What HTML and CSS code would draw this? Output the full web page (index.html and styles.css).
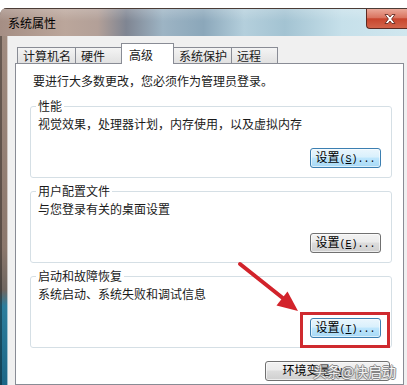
FILE: index.html
```html
<!DOCTYPE html>
<html lang="zh-CN">
<head>
  <meta charset="UTF-8">
  <meta name="viewport" content="width=device-width, initial-scale=1.0">
  <title>系统属性</title>
  <link rel="stylesheet" href="styles.css">
</head>
<body>
  <div class="window">
    <div class="titlebar">
      <span class="title">系统属性</span>
      <button class="close-btn" title="关闭">
        <svg width="12" height="10" viewBox="0 0 12 10">
          <path d="M1 0.5 L4 0.5 L6 3 L8 0.5 L11 0.5 L7.6 5 L11 9.5 L8 9.5 L6 7 L4 9.5 L1 9.5 L4.4 5 Z" fill="#fff" stroke="#5a1f17" stroke-width="0.8"/>
        </svg>
      </button>
    </div>

    <div class="dialog">
      <ul class="tabs">
        <li class="tab">计算机名</li>
        <li class="tab">硬件</li>
        <li class="tab active">高级</li>
        <li class="tab">系统保护</li>
        <li class="tab">远程</li>
      </ul>

      <div class="tab-page">
        <p class="intro">要进行大多数更改，您必须作为管理员登录。</p>

        <fieldset class="group">
          <legend>性能</legend>
          <p>视觉效果，处理器计划，内存使用，以及虚拟内存</p>
          <div class="actions">
            <button class="button hot">设置<span class="key">(<u>S</u>)...</span></button>
          </div>
        </fieldset>

        <fieldset class="group">
          <legend>用户配置文件</legend>
          <p>与您登录有关的桌面设置</p>
          <div class="actions">
            <button class="button">设置<span class="key">(<u>E</u>)...</span></button>
          </div>
        </fieldset>

        <fieldset class="group">
          <legend>启动和故障恢复</legend>
          <p>系统启动、系统失败和调试信息</p>
          <div class="actions">
            <span class="marked">
              <button class="button hot">设置<span class="key">(<u>T</u>)...</span></button>
              <span class="highlight"></span>
            </span>
          </div>
        </fieldset>

        <div class="actions env">
          <button class="button wide">环境变量<span class="key">(<u>N</u>)...</span></button>
          <span class="watermark">头条@快启动</span>
        </div>
      </div>
    </div>

    <!-- annotation arrow pointing at the startup settings button -->
    <svg class="arrow" width="80" height="70" viewBox="0 0 80 70">
      <line x1="10" y1="9" x2="54" y2="44" stroke="#d2232b" stroke-width="4" stroke-linecap="round"/>
      <polygon points="68,56 46.5,50.5 57.5,36.5" fill="#d2232b"/>
    </svg>
  </div>
</body>
</html>
```

FILE: styles.css
```css
* {
  box-sizing: border-box;
}
body {
  margin: 0;
  width: 407px;
  height: 385px;
  overflow: hidden;
  background: #fff;
  font-family: "Noto Sans CJK SC", "Microsoft YaHei", sans-serif;
  font-size: 12px;
  line-height: 16px;
  color: #1a1a1a;
}
.window {
  position: relative;
  margin-top: 8px;
  height: 377px;
  display: flex;
  flex-direction: column;
  border-top-left-radius: 7px;
  overflow: hidden;
  background: linear-gradient(to bottom, #a38e82 0, #8b776c 240px, #6f6660 282px, #2c7e9d 298px, #1c6686 100%);
  box-shadow: inset 2px 0 0 rgba(0, 0, 0, 0.35);
}
.titlebar {
  height: 28px;
  display: flex;
  align-items: center;
  justify-content: space-between;
  padding-left: 8px;
  border-top: 1px solid #4b3c36;
  background:
    linear-gradient(to bottom, rgba(255, 255, 255, 0.2), rgba(255, 255, 255, 0) 45%),
    linear-gradient(to right, #a58e84 0%, #bba69b 16%, #b3a098 24%, #7f8592 31%, #9db4c4 40%, #8ba7ba 50%, #b4cfdc 60%, #a3c3d2 70%, #c6e0ea 84%, #d0e7ef 100%);
}
.title {
  color: #000;
}
.close-btn {
  align-self: flex-start;
  width: 41px;
  height: 20px;
  padding: 0 0 0 17px;
  display: flex;
  align-items: center;
  border: 1px solid #5c2a22;
  border-top: 0;
  border-right: 0;
  border-radius: 0 0 0 4px;
  background: linear-gradient(#eaa898 0%, #da7561 45%, #c8452d 52%, #d2644a 100%);
}
.dialog {
  flex: 1;
  margin-left: 8px;
  padding: 7px 3px 0 7px;
  background: #f0f0f0;
  display: flex;
  flex-direction: column;
  box-shadow: -1px 0 0 rgba(255, 255, 255, 0.55);
}
.tabs {
  list-style: none;
  margin: 0 0 -1px;
  padding: 0 0 0 2px;
  height: 21px;
  display: flex;
  align-items: flex-end;
  position: relative;
  z-index: 1;
}
.tab {
  height: 16px;
  min-width: 47px;
  margin: 0 -1px 1px 0;
  padding: 0 4px 0 5px;
  border: 1px solid #898c95;
  border-bottom: 0;
  background: linear-gradient(#f4f4f4, #e1e1e1);
  white-space: nowrap;
}
.tab.active {
  height: 21px;
  min-width: 53px;
  margin-bottom: 0;
  padding: 3px 4px 0 7px;
  background: #fff;
  position: relative;
}
.tab-page {
  flex: 1;
  background: #fff;
  border: 1px solid #898c95;
  padding: 9px 11px 0 14px;
}
.intro {
  margin: 0 0 9px 3px;
}
.group {
  margin: 0 0 5px;
  padding: 2px 10px 9px 7px;
  min-width: 0;
  border: 1px solid #d5dfe5;
  border-radius: 3px;
}
.group legend {
  margin-left: -2px;
  padding: 0 2px;
}
.group p {
  margin: 0;
}
.actions {
  display: flex;
  justify-content: flex-end;
  margin-top: 16px;
}
.button {
  width: 71px;
  height: 20px;
  padding: 0;
  border: 1px solid #707070;
  border-radius: 3px;
  background: linear-gradient(#f2f2f2 0%, #ebebeb 45%, #dddddd 50%, #cfcfcf 100%);
  box-shadow: inset 0 0 0 1px rgba(255, 255, 255, 0.6);
  font-family: inherit;
  font-size: 12px;
  line-height: 16px;
  color: #000;
}
.button.hot {
  border-color: #3c7fb1;
  background: linear-gradient(#eaf6fd 0%, #d9f0fc 45%, #bee6fd 50%, #a7d9f5 100%);
}
.button.wide {
  width: 125px;
  padding-right: 6px;
}
.key {
  font-family: "Liberation Mono", monospace;
  font-size: 10px;
}
.marked {
  position: relative;
  display: flex;
}
.highlight {
  position: absolute;
  inset: -6px -9px -10px -10px;
  border: 3px solid #cf2a2f;
}
.env {
  position: relative;
  margin-top: 13px;
  padding-right: 2px;
}
.watermark {
  position: absolute;
  right: -4px;
  top: 0;
  font-size: 14px;
  line-height: 20px;
  color: #f6f6f6;
  text-shadow: 1px 0 0 #777, -1px 0 0 #777, 0 1px 0 #777, 0 -1px 0 #777;
  opacity: 0.85;
}
.arrow {
  position: absolute;
  left: 230px;
  top: 247px;
}
```
